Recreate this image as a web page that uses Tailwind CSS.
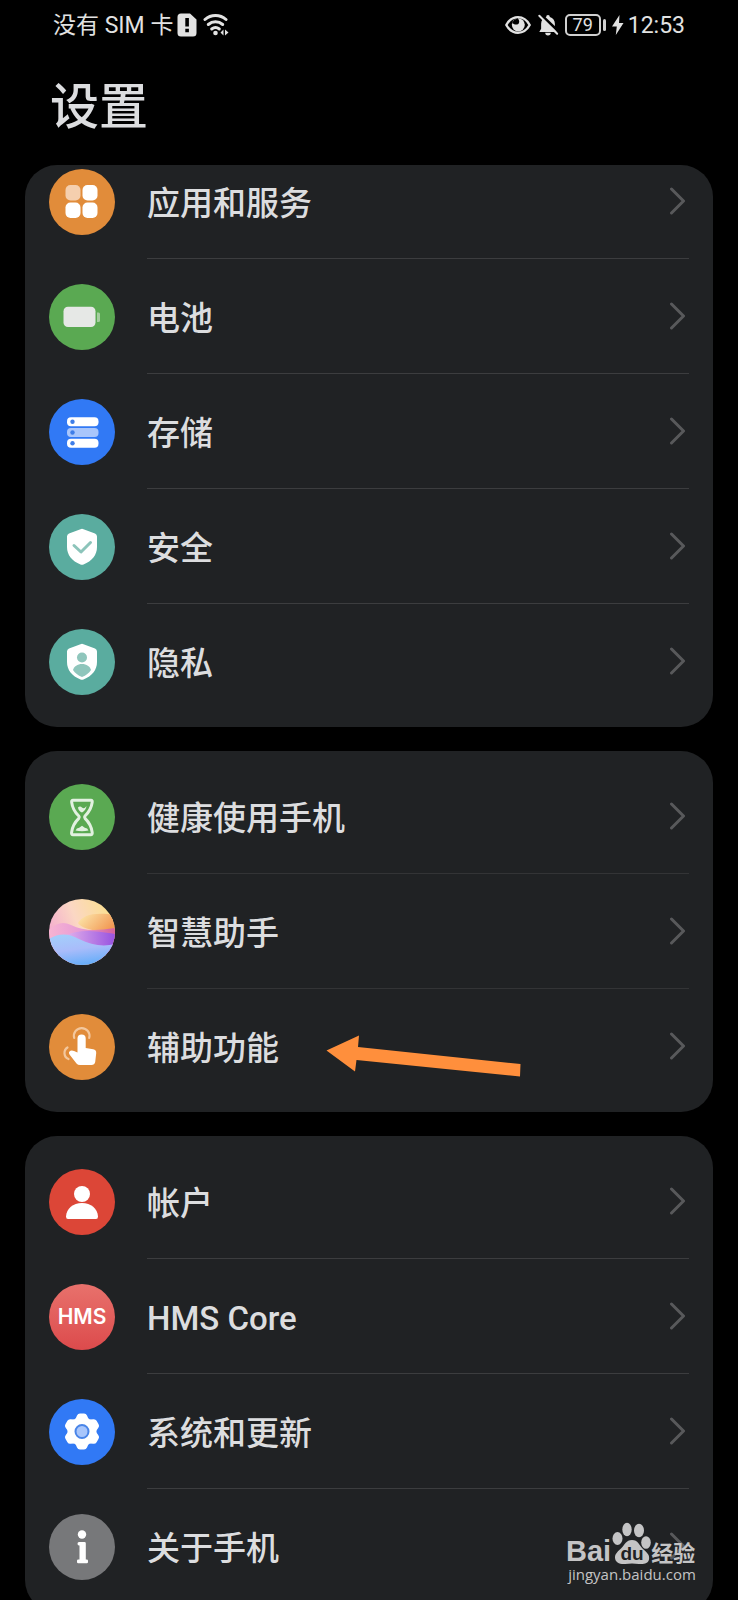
<!DOCTYPE html>
<html lang="zh-CN" class="h-full bg-black">
<head>
  <meta charset="UTF-8" />
  <meta name="viewport" content="width=device-width, initial-scale=1.0" />
  <title>设置</title>
  <script src="https://cdn.jsdelivr.net/npm/@tailwindcss/browser@4"></script>
</head>
<body class="h-full bg-black text-[#dcdddf] font-['Roboto','Noto_Sans_CJK_SC',sans-serif]">
  <div class="relative flex flex-col h-screen overflow-hidden">

    <!-- Status bar -->
    <div class="flex shrink-0 items-center justify-between h-[50px] px-[53px] text-[23px] leading-none text-[#e2e2e2]">
      <div class="flex items-center">
        <span>没有 SIM 卡</span>
        <svg class="ml-1 w-5 h-6" viewBox="0 0 20 24" aria-hidden="true">
          <path d="M4 .5h9l6.500 6V20a3.500 3.500 0 0 1-3.500 3.500H4A3.500 3.500 0 0 1 .5 20V4A3.500 3.500 0 0 1 4 .5z" fill="#e2e2e2"/>
          <path d="M8.300 5h3.600v8.500H8.300zM8.300 15.800h3.600v3.500H8.300z" fill="#000"/>
        </svg>
        <svg class="ml-1.5 w-[26px] h-6" viewBox="0 0 26 24" aria-hidden="true">
          <g fill="none" stroke="#e2e2e2" stroke-width="3" stroke-linecap="round">
            <path d="M2 6.500a15.500 15.500 0 0 1 21 0"/>
            <path d="M5.300 11.500a11 11 0 0 1 14.400 0"/>
            <path d="M8.700 16a6 6 0 0 1 7.600 0"/>
          </g>
          <circle cx="12.500" cy="20" r="2.300" fill="#e2e2e2"/>
          <path d="M20.500 16.500v6l-3-3zM22 16.500v6l3.500-3z" fill="#e2e2e2"/>
        </svg>
      </div>
      <div class="flex items-center">
        <svg class="w-[26px] h-5" viewBox="0 0 26 20" aria-hidden="true">
          <path d="M1.300 10C7-.5 19-.5 24.700 10 19 20.300 7 20.300 1.300 10z" fill="none" stroke="#e2e2e2" stroke-width="2.400" stroke-linejoin="round"/>
          <circle cx="13.300" cy="9.800" r="6.500" fill="#e2e2e2"/>
          <path d="M9 5l3.500-1.800c2.500 2 2.300 5.800-.5 6.300-2.200.5-3.500-.8-5-1.500z" fill="#000"/>
        </svg>
        <svg class="ml-1.5 w-[22px] h-6" viewBox="0 0 24 24" aria-hidden="true">
          <path d="M10 3.200a2 2 0 0 1 4 0c3.500 1 5.500 3.800 5.500 7.300V16l2 3.500H2.500l2-3.500v-5.500c0-3.500 2-6.300 5.500-7.300zM9 20.500h6a3 3 0 0 1-6 0z" fill="#e2e2e2"/>
          <path d="M3.500 0L25 20.500" stroke="#000" stroke-width="3"/>
          <path d="M2.500 2L22 21.500" stroke="#e2e2e2" stroke-width="2.200" stroke-linecap="round"/>
        </svg>
        <div class="ml-1.5 flex items-center justify-center w-9 h-[22px] rounded-[5px] border-2 border-[#d0d0d0] text-[18px] leading-none">79</div>
        <span class="ml-[2px] w-[3px] h-3 rounded-sm bg-[#d0d0d0]"></span>
        <svg class="ml-1.5 w-3 h-5" viewBox="0 0 12 20" aria-hidden="true">
          <path d="M7.500 0L0 11.500h4.800L3.800 20 11.500 8H7z" fill="#e2e2e2"/>
        </svg>
        <span class="ml-1">12:53</span>
      </div>
    </div>

    <h1 class="flex shrink-0 items-center h-[115px] px-[50px] text-[49px] leading-none font-medium">设置</h1>

    <main class="flex flex-col gap-6 px-[25px]">

      <!-- Device group, partly scrolled under the title -->
      <section class="shrink-0 overflow-hidden rounded-[32px] bg-[#202224] px-6 py-2">
        <ul class="-mt-[29px]">
          <li>
            <a href="#" class="flex items-center gap-8 h-[115px]">
              <svg class="shrink-0 w-[66px] h-[66px]" viewBox="0 0 66 66" aria-hidden="true">
                <circle cx="33" cy="33" r="33" fill="#e18c3a"/>
                <rect x="16.500" y="16" width="15" height="15.500" rx="5" fill="#f5cfae"/>
                <rect x="33.500" y="16" width="15" height="15.500" rx="5" fill="#fff"/>
                <rect x="16.500" y="33.500" width="15" height="15.500" rx="5" fill="#fff"/>
                <rect x="33.500" y="33.500" width="15" height="15.500" rx="5" fill="#fff"/>
              </svg>
              <span class="flex flex-1 items-center justify-between h-full border-b border-[#3c3d3f] pr-1 text-[33px] leading-none font-medium">
                <span class="pt-1">应用和服务</span>
                <svg class="w-4 h-7" viewBox="0 0 16 28" fill="none" stroke="#58595b" stroke-width="3" stroke-linecap="round" stroke-linejoin="round" aria-hidden="true"><path d="M2.500 2l12 12-12 12"/></svg>
              </span>
            </a>
          </li>
          <li>
            <a href="#" class="flex items-center gap-8 h-[115px]">
              <svg class="shrink-0 w-[66px] h-[66px]" viewBox="0 0 66 66" aria-hidden="true">
                <circle cx="33" cy="33" r="33" fill="#5aa952"/>
                <rect x="14.500" y="22.700" width="32" height="20.300" rx="4.500" fill="#e6e8e6"/>
                <path d="M48 28.500h1.500q1.500 0 1.500 1.500v6.500q0 1.500-1.500 1.500H48z" fill="#a5cda0"/>
              </svg>
              <span class="flex flex-1 items-center justify-between h-full border-b border-[#3c3d3f] pr-1 text-[33px] leading-none font-medium">
                <span class="pt-1">电池</span>
                <svg class="w-4 h-7" viewBox="0 0 16 28" fill="none" stroke="#58595b" stroke-width="3" stroke-linecap="round" stroke-linejoin="round" aria-hidden="true"><path d="M2.500 2l12 12-12 12"/></svg>
              </span>
            </a>
          </li>
          <li>
            <a href="#" class="flex items-center gap-8 h-[115px]">
              <svg class="shrink-0 w-[66px] h-[66px]" viewBox="0 0 66 66" aria-hidden="true">
                <circle cx="33" cy="33" r="33" fill="#3179f5"/>
                <rect x="18" y="18.300" width="31.500" height="9" rx="4" fill="#fff"/>
                <rect x="18" y="29" width="31.500" height="9" rx="4" fill="#a9c6fb"/>
                <rect x="18" y="39.700" width="31.500" height="9" rx="4" fill="#fff"/>
                <g fill="#3f7ee8"><circle cx="23.500" cy="22.800" r="2.200"/><circle cx="23.500" cy="33.500" r="2.200"/><circle cx="23.500" cy="44.200" r="2.200"/></g>
              </svg>
              <span class="flex flex-1 items-center justify-between h-full border-b border-[#3c3d3f] pr-1 text-[33px] leading-none font-medium">
                <span class="pt-1">存储</span>
                <svg class="w-4 h-7" viewBox="0 0 16 28" fill="none" stroke="#58595b" stroke-width="3" stroke-linecap="round" stroke-linejoin="round" aria-hidden="true"><path d="M2.500 2l12 12-12 12"/></svg>
              </span>
            </a>
          </li>
          <li>
            <a href="#" class="flex items-center gap-8 h-[115px]">
              <svg class="shrink-0 w-[66px] h-[66px]" viewBox="0 0 66 66" aria-hidden="true">
                <circle cx="33" cy="33" r="33" fill="#5aac9f"/>
                <path d="M31.500 15.200q1.500-.7 3 0L46 19.500q2 .8 2 3V33c0 8-5 14-13.500 17.500q-1.500.6-3 0C23 47 18 41 18 33V22.500q0-2.200 2-3z" fill="#fff"/>
                <path d="M25 31.500l7 6.500 9.500-9.500" fill="none" stroke="#8cc4ba" stroke-width="3" stroke-linecap="round" stroke-linejoin="round"/>
              </svg>
              <span class="flex flex-1 items-center justify-between h-full border-b border-[#3c3d3f] pr-1 text-[33px] leading-none font-medium">
                <span class="pt-1">安全</span>
                <svg class="w-4 h-7" viewBox="0 0 16 28" fill="none" stroke="#58595b" stroke-width="3" stroke-linecap="round" stroke-linejoin="round" aria-hidden="true"><path d="M2.500 2l12 12-12 12"/></svg>
              </span>
            </a>
          </li>
          <li>
            <a href="#" class="flex items-center gap-8 h-[115px]">
              <svg class="shrink-0 w-[66px] h-[66px]" viewBox="0 0 66 66" aria-hidden="true">
                <circle cx="33" cy="33" r="33" fill="#5aac9f"/>
                <path d="M31.500 15.200q1.500-.7 3 0L46 19.500q2 .8 2 3V33c0 8-5 14-13.500 17.500q-1.500.6-3 0C23 47 18 41 18 33V22.500q0-2.200 2-3z" fill="#fff"/>
                <g fill="#8fc6bc"><circle cx="33" cy="28.500" r="5"/><path d="M24 41c1-3.500 4.500-6 9-6s8 2.500 9 6c-2 3-5 5.500-9 7-4-1.500-7-4-9-7z"/></g>
              </svg>
              <span class="flex flex-1 items-center justify-between h-full border-b border-transparent pr-1 text-[33px] leading-none font-medium">
                <span class="pt-1">隐私</span>
                <svg class="w-4 h-7" viewBox="0 0 16 28" fill="none" stroke="#58595b" stroke-width="3" stroke-linecap="round" stroke-linejoin="round" aria-hidden="true"><path d="M2.500 2l12 12-12 12"/></svg>
              </span>
            </a>
          </li>
        </ul>
      </section>

      <!-- Assistance group -->
      <section class="shrink-0 rounded-[32px] bg-[#202224] px-6 py-2">
        <ul>
          <li>
            <a href="#" class="flex items-center gap-8 h-[115px]">
              <svg class="shrink-0 w-[66px] h-[66px]" viewBox="0 0 66 66" aria-hidden="true">
                <circle cx="33" cy="33" r="33" fill="#5aa952"/>
                <path d="M24 16.300h18q1.500 0 1.200 2-1 7.700-7.200 13.700-1 1.200 0 2.400 6.200 6 7.200 14 .3 2.300-1.500 2.300H24q-1.700 0-1.400-2.300 1-8 7.200-14 1-1.200 0-2.400-6.200-6-7.100-13.700-.3-2 1.300-2z" fill="none" stroke="#e2f1e0" stroke-width="3" stroke-linejoin="round"/>
                <path d="M29 23.500q2-2 4 0t4.500-1.500q-.5 4-4.500 6.500-3.500-1.500-4-5zM26.500 46.500q1-2.500 3.700-2.800l2.800-2 2.800 2q2.700.3 3.700 2.800-6.500 1.300-13 0z" fill="#e2f1e0"/>
              </svg>
              <span class="flex flex-1 items-center justify-between h-full border-b border-[#333436] pr-1 text-[33px] leading-none font-medium">
                <span class="pt-1">健康使用手机</span>
                <svg class="w-4 h-7" viewBox="0 0 16 28" fill="none" stroke="#58595b" stroke-width="3" stroke-linecap="round" stroke-linejoin="round" aria-hidden="true"><path d="M2.500 2l12 12-12 12"/></svg>
              </span>
            </a>
          </li>
          <li>
            <a href="#" class="flex items-center gap-8 h-[115px]">
              <svg class="shrink-0 w-[66px] h-[66px]" viewBox="0 0 66 66" aria-hidden="true">
                <defs>
                  <clipPath id="orb"><circle cx="33" cy="33" r="33"/></clipPath>
                  <linearGradient id="orbTop" x1="0" y1=".6" x2="1" y2=".2"><stop offset="0" stop-color="#f3a9cf"/><stop offset=".45" stop-color="#fbd7c4"/><stop offset="1" stop-color="#fbe08a"/></linearGradient>
                  <linearGradient id="orbSun" x1="0" y1="0" x2="1" y2=".5"><stop offset="0" stop-color="#fdebb0"/><stop offset="1" stop-color="#f29a55"/></linearGradient>
                  <linearGradient id="orbMid" x1="0" y1="0" x2="1" y2="0"><stop offset="0" stop-color="#f7b4d2"/><stop offset=".5" stop-color="#e59ad6"/><stop offset="1" stop-color="#d4609c"/></linearGradient>
                  <linearGradient id="orbViolet" x1="0" y1="0" x2="1" y2="0"><stop offset="0" stop-color="#e0aeea"/><stop offset="1" stop-color="#9752e0"/></linearGradient>
                  <linearGradient id="orbSea" x1=".2" y1="0" x2=".5" y2="1"><stop offset="0" stop-color="#a3cffb"/><stop offset=".5" stop-color="#a9bcfa"/><stop offset="1" stop-color="#66aef9"/></linearGradient>
                </defs>
                <g clip-path="url(#orb)">
                  <path d="M0 0h66v66H0z" fill="url(#orbTop)"/>
                  <path d="M29 24c5-8 16-11 37-8v18c-15-2-33-3-37-10z" fill="url(#orbSun)"/>
                  <path d="M0 31c7-7 14-9 22-5 12 6 24 6 44 3v34H0z" fill="url(#orbMid)"/>
                  <path d="M18 36c14-6 26-4 48-1v20H30z" fill="url(#orbViolet)"/>
                  <path d="M0 40c11-7 21-5 30 0 12 6 24 8 36 5v21H0z" fill="url(#orbSea)"/>
                </g>
              </svg>
              <span class="flex flex-1 items-center justify-between h-full border-b border-[#333436] pr-1 text-[33px] leading-none font-medium">
                <span class="pt-1">智慧助手</span>
                <svg class="w-4 h-7" viewBox="0 0 16 28" fill="none" stroke="#58595b" stroke-width="3" stroke-linecap="round" stroke-linejoin="round" aria-hidden="true"><path d="M2.500 2l12 12-12 12"/></svg>
              </span>
            </a>
          </li>
          <li class="relative">
            <a href="#" class="flex items-center gap-8 h-[115px]">
              <svg class="shrink-0 w-[66px] h-[66px]" viewBox="0 0 66 66" aria-hidden="true">
                <circle cx="33" cy="33" r="33" fill="#e18c3a"/>
                <path d="M25.200 24a7.800 7.800 0 1 1 15 0M18.500 33.500a6.500 6.500 0 0 0 1 11.500" fill="none" stroke="#f3c79d" stroke-width="2.200" stroke-linecap="round"/>
                <path d="M28.500 24.500a4.100 4.100 0 0 1 8.200 0V34l7.500 1.300q3.300.7 3 4l-1 8.700q-.6 3-3.700 3H31q-2.200 0-3.500-1.500l-7-9q-1.500-2.500 1-3.700 1.500-.6 3.500.2l3.500 1.500z" fill="#fff"/>
              </svg>
              <span class="flex flex-1 items-center justify-between h-full border-b border-transparent pr-1 text-[33px] leading-none font-medium">
                <span class="pt-1">辅助功能</span>
                <svg class="w-4 h-7" viewBox="0 0 16 28" fill="none" stroke="#58595b" stroke-width="3" stroke-linecap="round" stroke-linejoin="round" aria-hidden="true"><path d="M2.500 2l12 12-12 12"/></svg>
              </span>
            </a>
            <!-- Pointer arrow -->
            <svg class="absolute left-[276px] top-[45px] w-[196px] h-11 pointer-events-none" viewBox="0 0 196 44" aria-hidden="true">
              <path d="M1.500 16.500L34 1.500 33 13l162.500 17-.5 12.500L31.500 26 30 37.500z" fill="#ff8f3c"/>
            </svg>
          </li>
        </ul>
      </section>

      <!-- System group -->
      <section class="shrink-0 rounded-[32px] bg-[#202224] px-6 py-2">
        <ul>
          <li>
            <a href="#" class="flex items-center gap-8 h-[115px]">
              <svg class="shrink-0 w-[66px] h-[66px]" viewBox="0 0 66 66" aria-hidden="true">
                <circle cx="33" cy="33" r="33" fill="#dc4637"/>
                <circle cx="33" cy="25" r="8" fill="#fff"/>
                <path d="M17 47.500C17.500 39.500 24 34 33 34s15.500 5.500 16 13.500q0 2.500-2 2.500H19q-2 0-2-2.500z" fill="#fff"/>
              </svg>
              <span class="flex flex-1 items-center justify-between h-full border-b border-[#3c3d3f] pr-1 text-[33px] leading-none font-medium">
                <span class="pt-1">帐户</span>
                <svg class="w-4 h-7" viewBox="0 0 16 28" fill="none" stroke="#58595b" stroke-width="3" stroke-linecap="round" stroke-linejoin="round" aria-hidden="true"><path d="M2.500 2l12 12-12 12"/></svg>
              </span>
            </a>
          </li>
          <li>
            <a href="#" class="flex items-center gap-8 h-[115px]">
              <span class="flex shrink-0 items-center justify-center w-[66px] h-[66px] rounded-full bg-linear-to-b from-[#e8716c] to-[#dc4a4c] font-['Inter',sans-serif] text-[21px] leading-none font-semibold text-white">HMS</span>
              <span class="flex flex-1 items-center justify-between h-full border-b border-[#3c3d3f] pr-1 text-[33px] leading-none font-medium">
                <span class="pt-1">HMS Core</span>
                <svg class="w-4 h-7" viewBox="0 0 16 28" fill="none" stroke="#58595b" stroke-width="3" stroke-linecap="round" stroke-linejoin="round" aria-hidden="true"><path d="M2.500 2l12 12-12 12"/></svg>
              </span>
            </a>
          </li>
          <li>
            <a href="#" class="flex items-center gap-8 h-[115px]">
              <svg class="shrink-0 w-[66px] h-[66px]" viewBox="0 0 66 66" aria-hidden="true">
                <circle cx="33" cy="33" r="33" fill="#3179f5"/>
                <g fill="#fff">
                  <circle cx="33" cy="32.500" r="14.500"/>
                  <path id="tooth" d="M26.500 20l1.500-3.500q.8-2 3-2h4q2.200 0 3 2l1.500 3.500z"/>
                  <use href="#tooth" transform="rotate(60 33 32.500)"/>
                  <use href="#tooth" transform="rotate(120 33 32.500)"/>
                  <use href="#tooth" transform="rotate(180 33 32.500)"/>
                  <use href="#tooth" transform="rotate(240 33 32.500)"/>
                  <use href="#tooth" transform="rotate(300 33 32.500)"/>
                </g>
                <circle cx="33" cy="32.500" r="6.500" fill="#a9c6fb" stroke="#4a85e8" stroke-width="2"/>
              </svg>
              <span class="flex flex-1 items-center justify-between h-full border-b border-[#3c3d3f] pr-1 text-[33px] leading-none font-medium">
                <span class="pt-1">系统和更新</span>
                <svg class="w-4 h-7" viewBox="0 0 16 28" fill="none" stroke="#58595b" stroke-width="3" stroke-linecap="round" stroke-linejoin="round" aria-hidden="true"><path d="M2.500 2l12 12-12 12"/></svg>
              </span>
            </a>
          </li>
          <li>
            <a href="#" class="flex items-center gap-8 h-[115px]">
              <svg class="shrink-0 w-[66px] h-[66px]" viewBox="0 0 66 66" aria-hidden="true">
                <circle cx="33" cy="33" r="33" fill="#77787a"/>
                <circle cx="33" cy="20.500" r="4.200" fill="#fff"/>
                <path d="M30 28h5.500q1.300 0 1.300 1.300V45.500h1q1.200 0 1.200 1.200v1.300q0 1.300-1.200 1.300h-8.600q-1.200 0-1.200-1.300v-1.300q0-1.200 1.200-1.200h1.300V31.500H30q-1.500 0-1.500-1.700T30 28z" fill="#fff"/>
              </svg>
              <span class="flex flex-1 items-center justify-between h-full border-b border-transparent pr-1 text-[33px] leading-none font-medium">
                <span class="pt-1">关于手机</span>
                <svg class="w-4 h-7" viewBox="0 0 16 28" fill="none" stroke="#58595b" stroke-width="3" stroke-linecap="round" stroke-linejoin="round" aria-hidden="true"><path d="M2.500 2l12 12-12 12"/></svg>
              </span>
            </a>
          </li>
        </ul>
      </section>
    </main>

    <!-- Watermark -->
    <div class="absolute right-10 bottom-[19px] w-[132px] text-[#c4c4c5]">
      <div class="flex items-end h-[46px] whitespace-nowrap">
        <span class="shrink-0 font-['Liberation_Sans',sans-serif] text-[29px] leading-[32px] font-bold">Bai</span>
        <svg class="shrink-0 w-10 h-[46px]" viewBox="0 0 40 46" aria-hidden="true">
          <g fill="#c4c4c5">
            <ellipse cx="6.500" cy="17.500" rx="5" ry="6.500"/>
            <ellipse cx="16" cy="8.500" rx="4.700" ry="6.800"/>
            <ellipse cx="28" cy="9.500" rx="5" ry="6.800"/>
            <ellipse cx="35" cy="21.500" rx="4.800" ry="6.300"/>
            <path d="M21 19c6 0 7 5 11 9 4 3.500 7 6 6 10.500-1 4-5 5-10 4.500-5-.8-9-.8-14 0-5 .5-10-1.500-10-6.500 0-4 3-6 6-9 4-4 5-8.500 11-8.500z"/>
          </g>
          <text x="21" y="39" text-anchor="middle" fill="#202224" font-family="Liberation Sans, sans-serif" font-size="19" font-weight="700">du</text>
        </svg>
        <span class="shrink-0 font-['Noto_Sans_CJK_SC',sans-serif] text-[22px] leading-[32px] font-bold">经验</span>
      </div>
      <div class="text-center font-['Open_Sans',sans-serif] text-[15px] leading-[14px] font-medium">jingyan.baidu.com</div>
    </div>

  </div>
</body>
</html>
